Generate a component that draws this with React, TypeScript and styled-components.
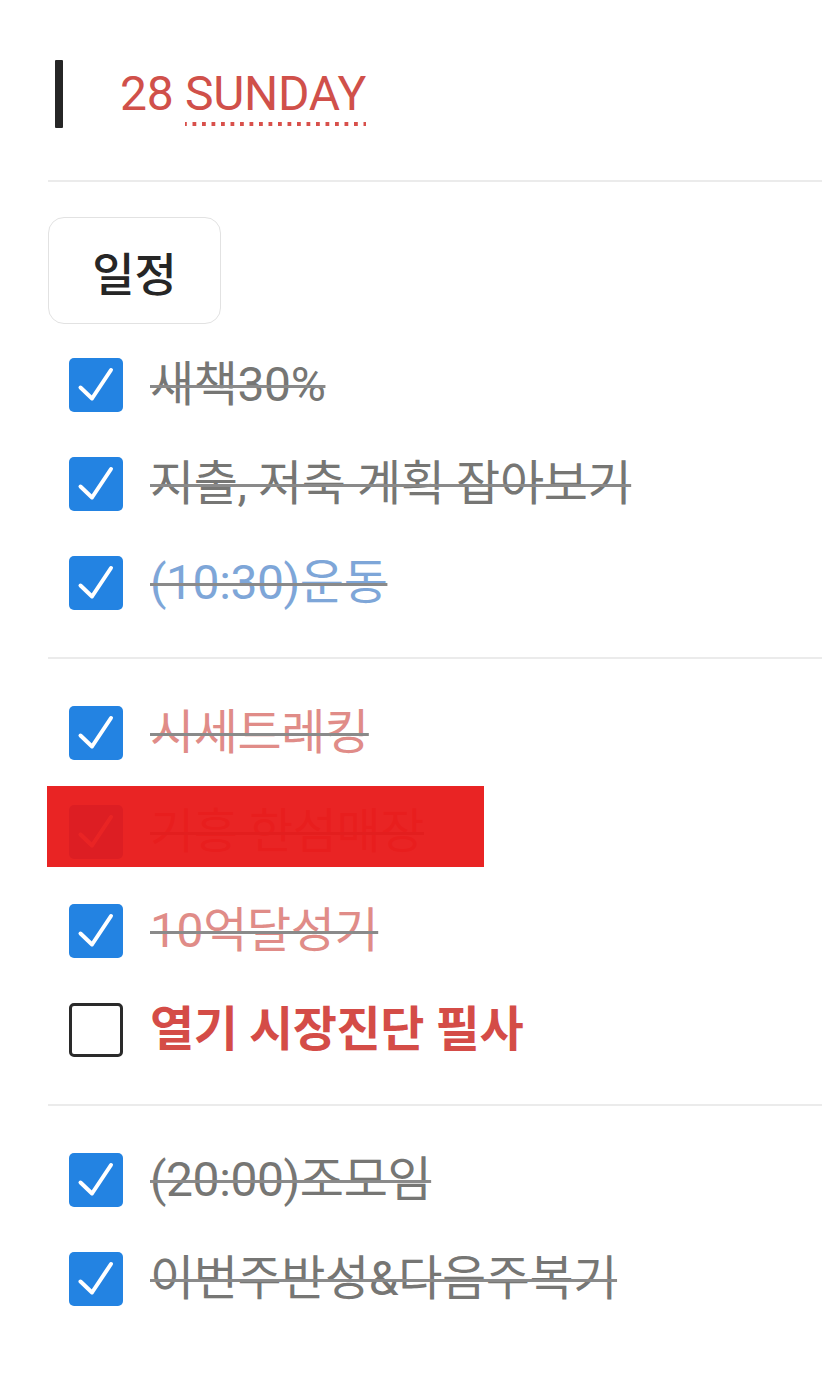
import styled, { createGlobalStyle, css } from "styled-components";

type Tone = "gray" | "blue" | "red" | "alert";

interface Todo {
  id: number;
  text: string;
  done: boolean;
  tone: Tone;
  hidden?: boolean;
}

const sections: Todo[][] = [
  [
    { id: 1, text: "새책30%", done: true, tone: "gray" },
    { id: 2, text: "지출, 저축 계획 잡아보기", done: true, tone: "gray" },
    { id: 3, text: "(10:30)운동", done: true, tone: "blue" },
  ],
  [
    { id: 4, text: "시세트레킹", done: true, tone: "red" },
    { id: 5, text: "기흥 한섬매장", done: true, tone: "red", hidden: true },
    { id: 6, text: "10억달성기", done: true, tone: "red" },
    { id: 7, text: "열기 시장진단 필사", done: false, tone: "alert" },
  ],
  [
    { id: 8, text: "(20:00)조모임", done: true, tone: "gray" },
    { id: 9, text: "이번주반성&다음주복기", done: true, tone: "gray" },
  ],
];

const toneColor: Record<Tone, string> = {
  gray: "#767674",
  blue: "#7ea6d8",
  red: "#e08c88",
  alert: "#d44c47",
};

const GlobalStyle = createGlobalStyle`
  body {
    margin: 0;
    background: #ffffff;
    font-family: Roboto, "Noto Sans CJK KR", sans-serif;
  }
`;

const Page = styled.div`
  width: 827px;
  min-height: 1384px;
  box-sizing: border-box;
  padding: 60px 5px 0 48px;
`;

const Header = styled.div`
  display: flex;
  align-items: center;
  height: 68px;
  padding-left: 7px;
`;

const Bar = styled.div`
  width: 8px;
  height: 68px;
  background: #262626;
  border-radius: 1px;
`;

const Title = styled.h1`
  margin: 0 0 0 57px;
  font-family: Roboto, "Noto Sans CJK KR", sans-serif;
  font-size: 48px;
  font-weight: 400;
  line-height: 1.2;
  color: #d0504a;
  letter-spacing: -0.3px;
`;

const Dotted = styled.span`
  padding-bottom: 4px;
  background-image: linear-gradient(to right, #d8504b 45%, transparent 45%);
  background-size: 9.5px 4px;
  background-repeat: repeat-x;
  background-position: -2px 100%;
`;

const Divider = styled.div<{ $gap?: string }>`
  height: 2px;
  background: #ebebeb;
  margin: ${(p) => p.$gap ?? "25px 0 24px"};
`;

const TagButton = styled.button`
  display: flex;
  align-items: center;
  justify-content: center;
  width: 173px;
  height: 107px;
  margin: 0;
  padding: 0;
  background: #ffffff;
  border: 1.5px solid #e2e2e2;
  border-radius: 16px;
  font-family: "Noto Sans CJK KR", sans-serif;
  font-size: 46px;
  font-weight: 500;
  color: #262626;
`;

const List = styled.div`
  display: flex;
  flex-direction: column;
`;

const Row = styled.div`
  position: relative;
  display: flex;
  align-items: center;
  height: 99px;
  padding-left: 21px;
`;

const Box = styled.span<{ $done: boolean }>`
  flex: none;
  display: flex;
  align-items: center;
  justify-content: center;
  width: 54px;
  height: 54px;
  box-sizing: border-box;
  border-radius: 5px;
  ${(p) =>
    p.$done
      ? css`
          background: #2383e2;
        `
      : css`
          background: #ffffff;
          border: 3.5px solid #2a2a2a;
        `}
`;

const Label = styled.span<{ $tone: Tone; $done: boolean }>`
  margin-left: 27px;
  font-family: Roboto, "Noto Sans CJK KR", sans-serif;
  font-size: 48px;
  line-height: 1.2;
  letter-spacing: -0.4px;
  color: ${(p) => toneColor[p.$tone]};
  font-weight: ${(p) => (p.$tone === "alert" ? 700 : 400)};
  ${(p) =>
    p.$done &&
    css`
      text-decoration: line-through;
      text-decoration-color: #8a8a8a;
      text-decoration-thickness: 3px;
    `}
`;

const Redact = styled.div`
  position: absolute;
  left: -1px;
  top: 4px;
  width: 437px;
  height: 81px;
  background: rgba(232, 24, 24, 0.95);
`;

const Check = () => (
  <svg width="54" height="54" viewBox="0 0 54 54" fill="none">
    <path
      d="M11.5 29.5l11.5 11L42 12"
      stroke="#ffffff"
      strokeWidth="4"
      strokeLinecap="round"
      strokeLinejoin="round"
    />
  </svg>
);

const App = () => {
  return (
    <Page>
      <GlobalStyle />
      <Header>
        <Bar />
        <Title>
          28 <Dotted>SUNDAY</Dotted>
        </Title>
      </Header>
      <Divider $gap="52px 0 35px" />
      <TagButton>일정</TagButton>
      {sections.map((items, index) => (
        <div key={index}>
          {index > 0 && <Divider />}
          <List style={index === 0 ? { marginTop: 11 } : undefined}>
            {items.map((todo) => (
              <Row key={todo.id}>
                <Box $done={todo.done}>{todo.done && <Check />}</Box>
                <Label $tone={todo.tone} $done={todo.done}>
                  {todo.text}
                </Label>
                {todo.hidden && <Redact />}
              </Row>
            ))}
          </List>
        </div>
      ))}
    </Page>
  );
};

export default App;
